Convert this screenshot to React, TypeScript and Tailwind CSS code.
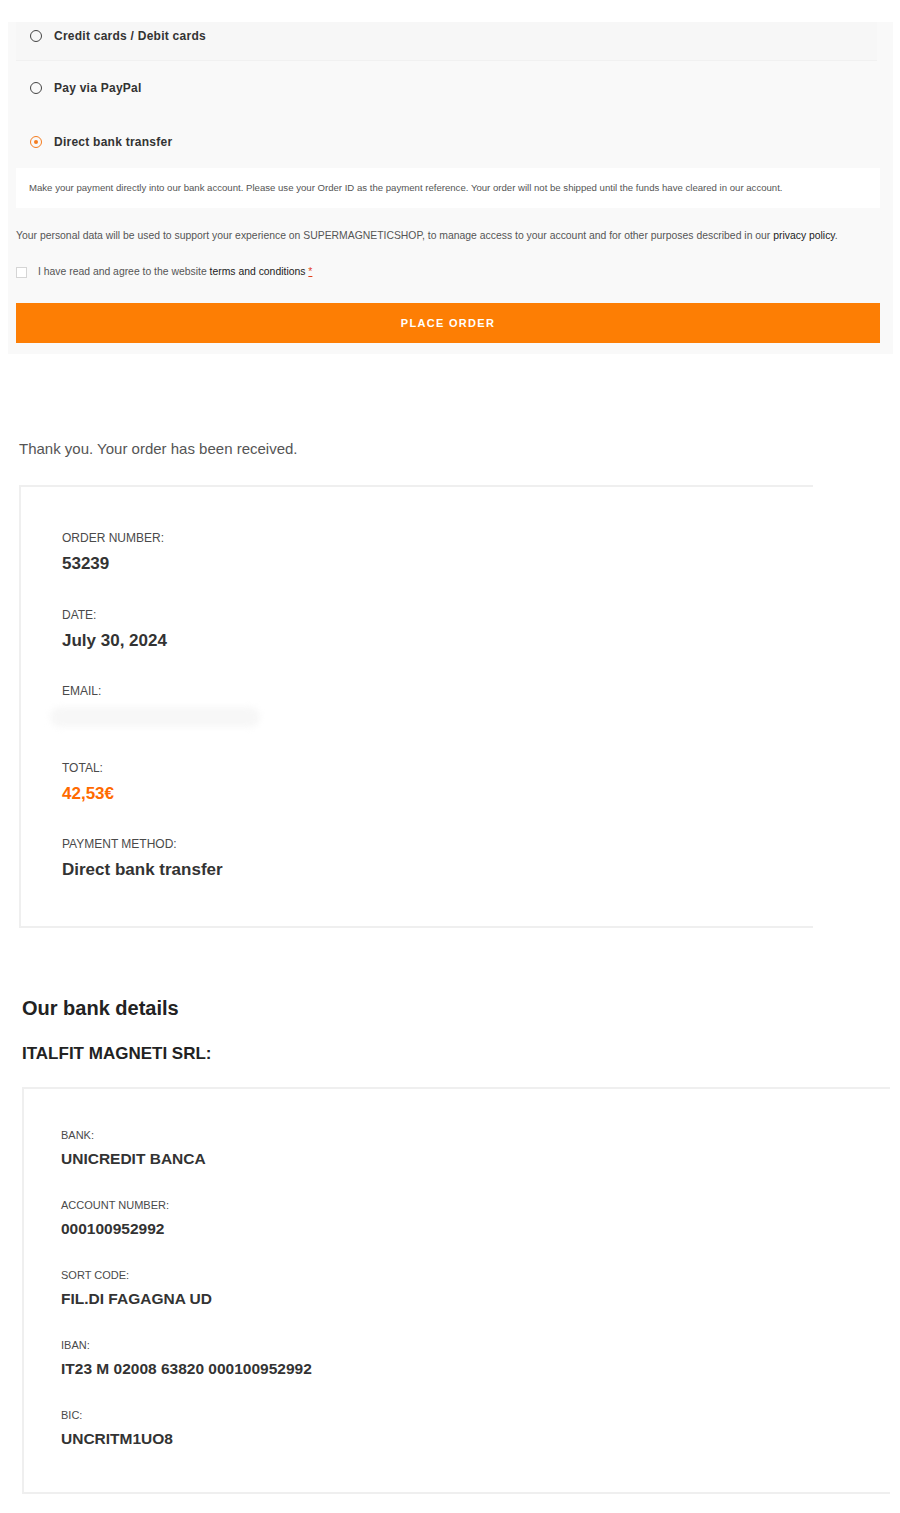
import React from "react";

const font = { fontFamily: '"Liberation Sans", Arial, sans-serif' };

const Radio = ({ checked }: { checked?: boolean }) =>
  checked ? (
    <span className="flex h-[12px] w-[12px] shrink-0 items-center justify-center rounded-full border-[1.5px] border-[#f57c1f]">
      <span className="h-[4px] w-[4px] rounded-full bg-[#f57c1f]" />
    </span>
  ) : (
    <span className="block h-[12px] w-[12px] shrink-0 rounded-full border-[1.5px] border-[#444]" />
  );

const orderItems = [
  { label: "ORDER NUMBER:", value: "53239" },
  { label: "DATE:", value: "July 30, 2024" },
  { label: "EMAIL:", value: "" },
  { label: "TOTAL:", value: "42,53€", accent: true },
  { label: "PAYMENT METHOD:", value: "Direct bank transfer" },
];

const bankItems = [
  { label: "BANK:", value: "UNICREDIT BANCA" },
  { label: "ACCOUNT NUMBER:", value: "000100952992" },
  { label: "SORT CODE:", value: "FIL.DI FAGAGNA UD" },
  { label: "IBAN:", value: "IT23 M 02008 63820 000100952992" },
  { label: "BIC:", value: "UNCRITM1UO8" },
];

export default function App() {
  return (
    <div className="min-h-[1513px] w-[900px] bg-white pt-[22px] pb-[20px]" style={font}>
      {/* checkout payment panel */}
      <div className="ml-[8px] w-[885px] bg-[#f9f9f9] pl-[8px] pr-[13px] pb-[11px]">
        <div className="mr-[3px] flex h-[39px] items-start gap-[12px] border-b border-[#f1f1f1] bg-[#f7f7f7] pl-[14px] pt-[8px]">
          <Radio />
          <span className="-mt-[1px] text-[12px] font-bold leading-[14px] tracking-[0.25px] text-[#333]">
            Credit cards / Debit cards
          </span>
        </div>
        <div className="flex h-[54px] items-center gap-[12px] pl-[14px]">
          <Radio />
          <span className="text-[12px] font-bold leading-[14px] tracking-[0.25px] text-[#333]">Pay via PayPal</span>
        </div>
        <div className="flex h-[53px] items-center gap-[12px] pl-[14px]">
          <Radio checked />
          <span className="text-[12px] font-bold leading-[14px] tracking-[0.25px] text-[#333]">
            Direct bank transfer
          </span>
        </div>
        <div className="flex h-[40px] items-center bg-white px-[13px] text-[9.6px] text-[#555]">
          Make your payment directly into our bank account. Please use your Order ID as the payment reference. Your
          order will not be shipped until the funds have cleared in our account.
        </div>
        <p className="mt-[21px] text-[10.4px] leading-[14px] text-[#555]">
          Your personal data will be used to support your experience on SUPERMAGNETICSHOP, to manage access to your
          account and for other purposes described in our <span className="text-[#222]">privacy policy</span>.
        </p>
        <div className="mt-[22px] flex h-[14px] items-center gap-[11px] text-[10.4px] text-[#555]">
          <span className="block h-[11px] w-[11px] shrink-0 border border-[#d5d5d5] bg-white" />
          <span>
            I have read and agree to the website <span className="text-[#222]">terms and conditions</span>{" "}
            <span className="text-[#e2401c] underline">*</span>
          </span>
        </div>
        <button className="mt-[24px] flex h-[40px] w-full items-center justify-center bg-[#fd7e04] text-[11px] font-bold tracking-[1.3px] text-white">
          PLACE ORDER
        </button>
      </div>

      {/* thank you */}
      <p className="ml-[19px] mt-[86px] text-[15px] leading-[18px] text-[#555]">
        Thank you. Your order has been received.
      </p>

      <div className="ml-[19px] mt-[27px] w-[794px] border-y-2 border-l-2 border-[#efefef] pl-[41px] pt-[44px] pb-[46px]">
        <div className="flex flex-col gap-[33.5px]">
          {orderItems.map((item) => (
            <div key={item.label} className="flex flex-col">
              <span className="text-[12px] leading-[14px] text-[#4a4a4a]">{item.label}</span>
              {item.value ? (
                <span
                  className={`mt-[9px] text-[17px] font-bold leading-[20px] ${
                    item.accent ? "text-[#ff6a00]" : "text-[#333]"
                  }`}
                >
                  {item.value}
                </span>
              ) : (
                <span className="mt-[9px] -ml-[12px] h-[20px] w-[210px] rounded-full bg-[#f7f7f7] blur-[3px]" />
              )}
            </div>
          ))}
        </div>
      </div>

      {/* bank details */}
      <h2 className="ml-[22px] mt-[68px] text-[20px] font-bold leading-[24px] text-[#222]">Our bank details</h2>
      <h3 className="ml-[22px] mt-[24px] text-[17px] font-bold leading-[20px] text-[#222]">ITALFIT MAGNETI SRL:</h3>

      <div className="ml-[22px] mt-[23px] w-[868px] border-y-2 border-l-2 border-[#efefef] pl-[37px] pt-[40px] pb-[44px]">
        <div className="flex flex-col gap-[31.5px]">
          {bankItems.map((item) => (
            <div key={item.label} className="flex flex-col">
              <span className="text-[11px] leading-[13px] text-[#4a4a4a]">{item.label}</span>
              <span className="mt-[7.5px] text-[15.5px] font-bold leading-[18px] text-[#333]">{item.value}</span>
            </div>
          ))}
        </div>
      </div>
    </div>
  );
}
